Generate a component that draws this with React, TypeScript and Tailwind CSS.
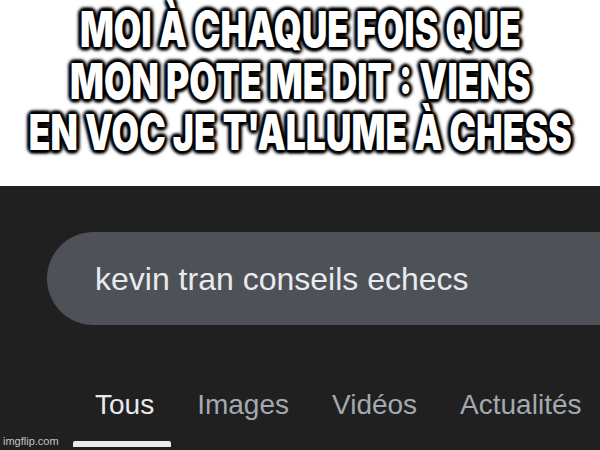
import React from 'react';

const tabs = [
  { label: 'Tous', active: true },
  { label: 'Images', active: false },
  { label: 'Vidéos', active: false },
  { label: 'Actualités', active: false },
];

export default function App() {
  return (
    <div className="relative w-[600px] h-[450px] overflow-hidden flex flex-col bg-white">
      {/* caption */}
      <div className="h-[186px] shrink-0 pt-[4px] flex justify-center font-['Inter','Liberation_Sans',sans-serif]">
        <p className="text-center leading-[51.5px] text-[50px] font-black text-white whitespace-nowrap scale-x-[0.71] [text-shadow:0_0_4px_#000,2px_2px_4px_#000,-2px_-2px_4px_#000,2px_-2px_4px_#000,-2px_2px_4px_#000,0_3px_4px_#000,0_-3px_4px_#000,4px_0_4px_#000,-4px_0_4px_#000]">
          MOI À CHAQUE FOIS QUE
          <br />
          MON POTE ME DIT : VIENS
          <br />
          EN VOC JE T'ALLUME À CHESS
        </p>
      </div>

      {/* google screenshot */}
      <div className="flex-1 bg-[#202020] pt-[46px] flex flex-col font-['Liberation_Sans',Arial,sans-serif]">
        <div className="ml-[47px] w-[620px] h-[93px] shrink-0 rounded-l-full bg-[#4e5157] flex items-center pl-[48px]">
          <span className="text-[32px] text-[#e8eaed] whitespace-nowrap">kevin tran conseils echecs</span>
        </div>

        <div className="mt-[64px] pl-[95px] flex gap-[43px] h-[32px] items-center">
          {tabs.map((t) => (
            <span
              key={t.label}
              className={t.active ? 'text-[28px] leading-[32px] text-[#e8eaed]' : 'text-[28px] leading-[32px] text-[#a2a9b1]'}
            >
              {t.label}
            </span>
          ))}
        </div>

        <div className="mt-[20px] ml-[73px] w-[98px] h-[6px] bg-[#e8eaed] rounded-t-[2px]" />
      </div>

      {/* watermark */}
      <span className="absolute left-[3px] bottom-[2px] text-[11px] leading-[13px] text-[#c4c4c4] font-['Liberation_Sans',Arial,sans-serif]">
        imgflip.com
      </span>
    </div>
  );
}
